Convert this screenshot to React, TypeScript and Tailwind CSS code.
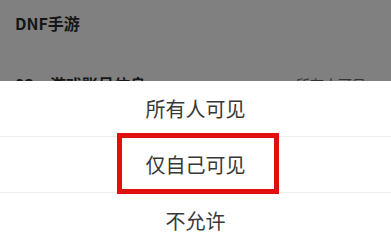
const options = ["所有人可见", "仅自己可见", "不允许"];

const font = { fontFamily: '"Noto Sans CJK SC", "Noto Sans", sans-serif' };

export default function App() {
    return (
        <div className="relative w-[391px] h-[244px] overflow-hidden bg-white" style={font}>
            {/* dimmed page behind the sheet */}
            <div className="h-[81px] overflow-hidden bg-[#808080] px-[15px]">
                <div className="pt-[12px] text-[16px] leading-[22px] font-bold text-[#151515]">DNF手游</div>
                <div className="mt-[39px] flex items-center justify-between text-[16px] leading-[22px]">
                    <span className="font-bold text-[#151515]">03、游戏账号信息</span>
                    <span className="mr-[10px] text-[14px] text-[#333]">所有人可见</span>
                </div>
            </div>

            {/* action sheet */}
            <div className="flex flex-col">
                {options.map((label, i) => (
                    <div
                        key={label}
                        className={
                            "flex h-[56px] items-center justify-center text-[20px] text-[#383838] " +
                            (i < options.length - 1 ? "border-b border-[#ececec]" : "")
                        }
                    >
                        {label}
                    </div>
                ))}
            </div>

            {/* highlight annotation */}
            <div className="absolute left-[117px] top-[133px] h-[61px] w-[162px] border-[5px] border-[#e0100f]" />
        </div>
    );
}
